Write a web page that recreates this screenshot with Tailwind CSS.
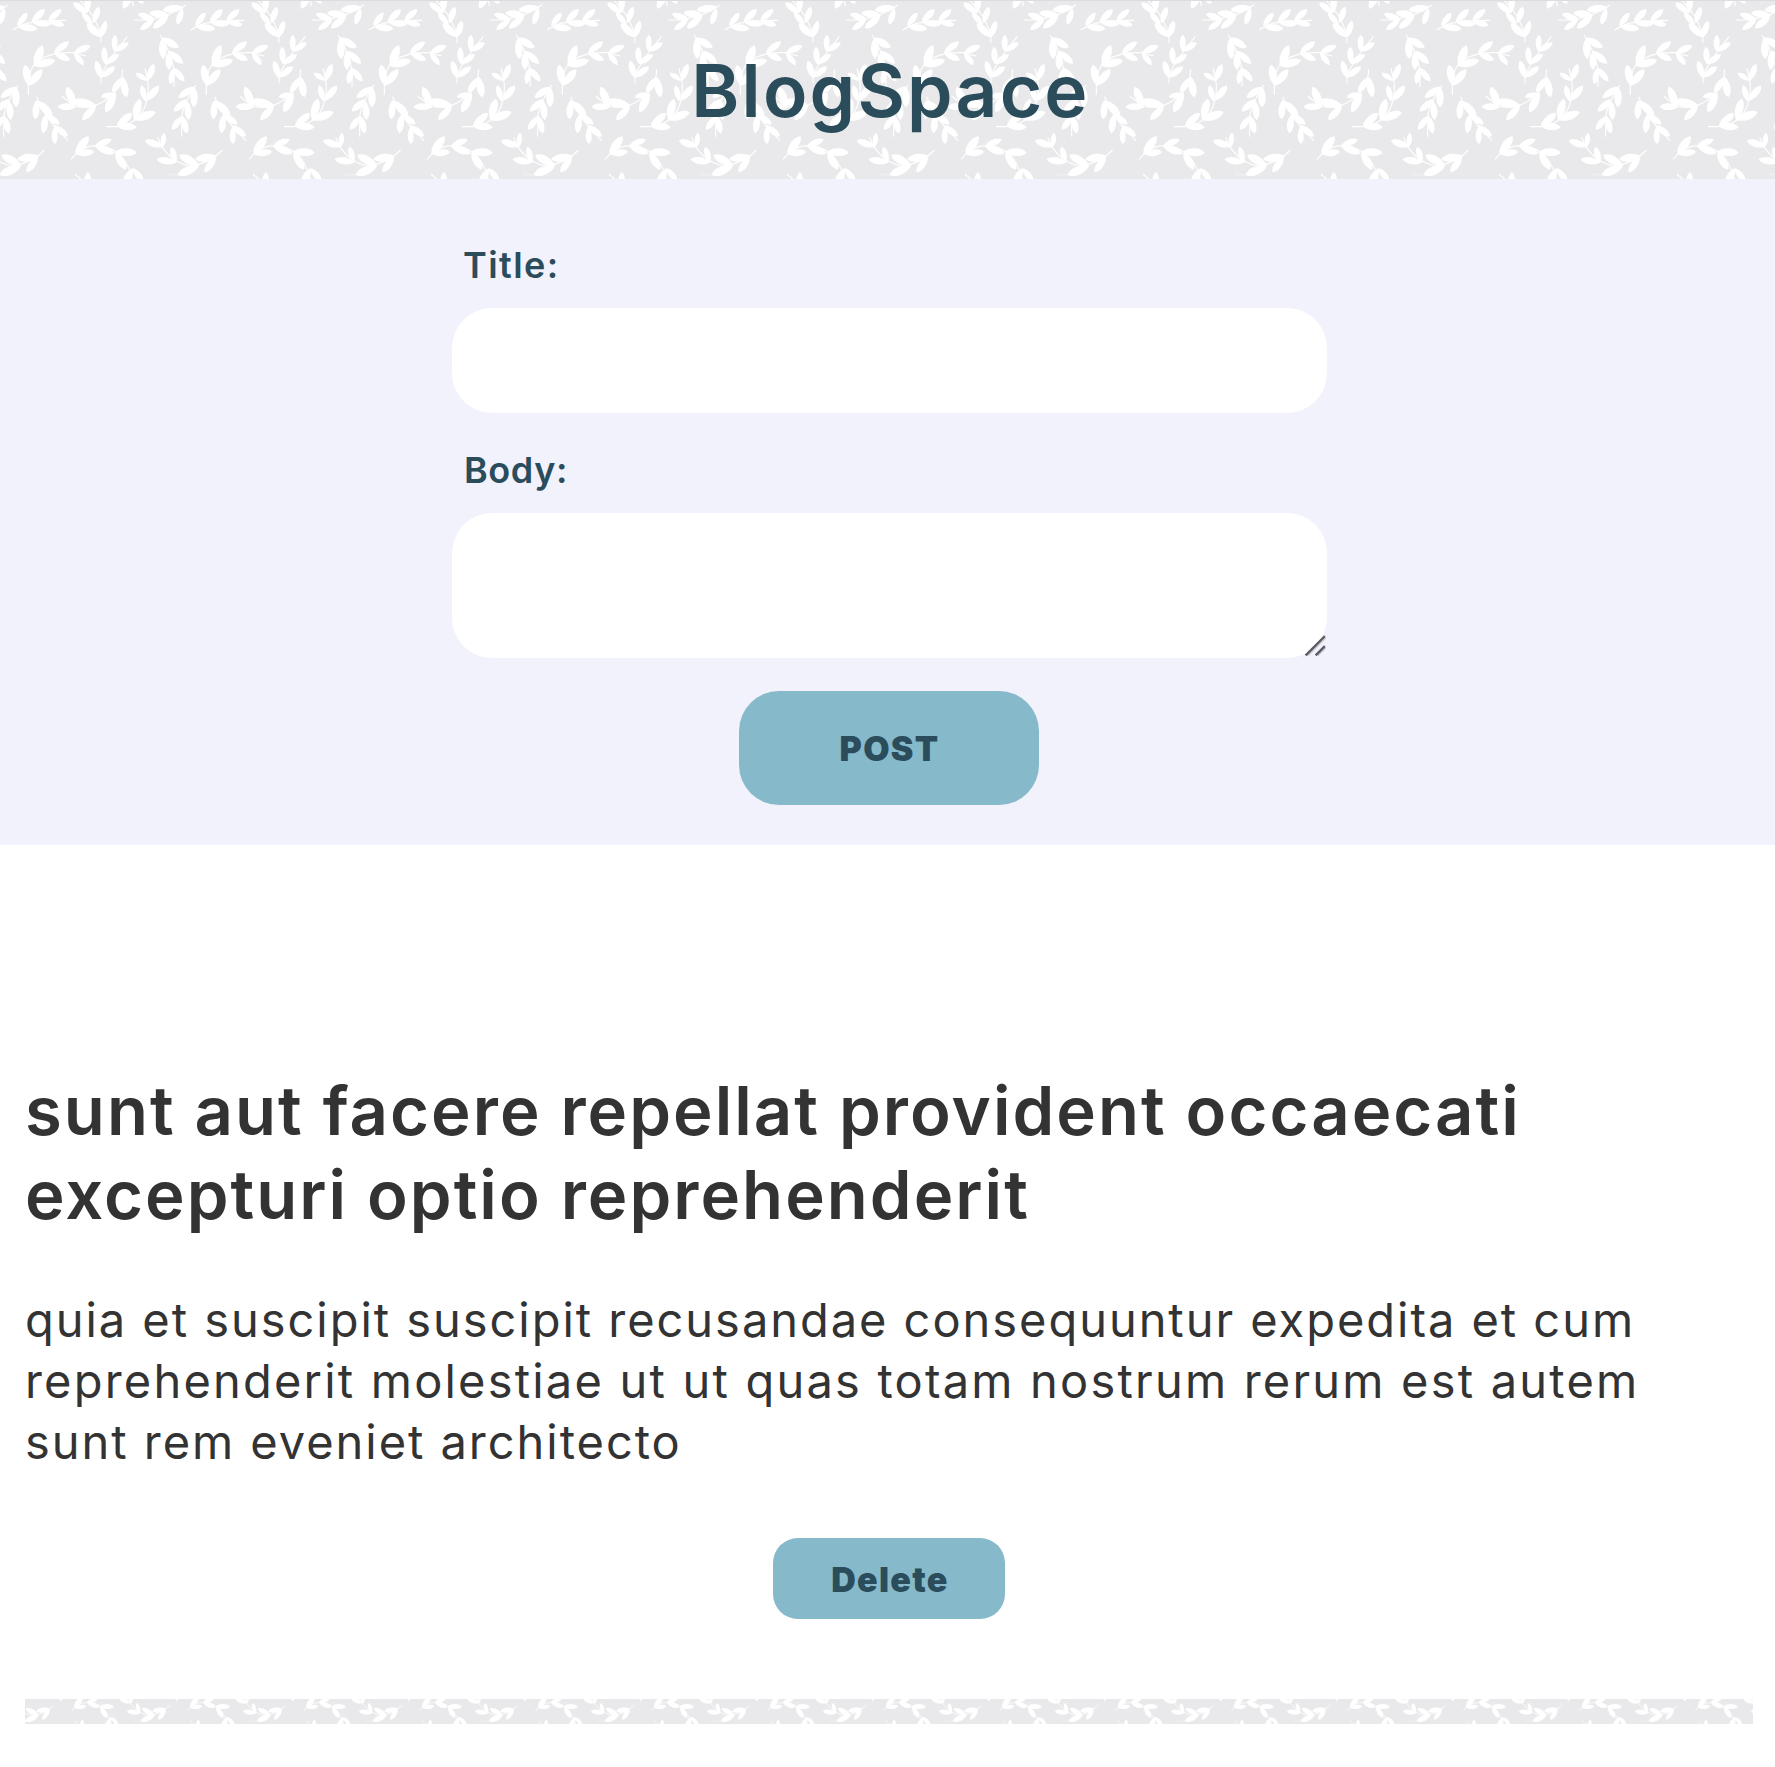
<!DOCTYPE html>
<html lang="en">
<head>
<meta charset="utf-8">
<title>BlogSpace</title>
<script src="https://cdn.jsdelivr.net/npm/@tailwindcss/browser@4"></script>
</head>
<body class="bg-white font-['Inter',sans-serif] text-[#333333]">
<header class="relative h-[179px] border-t border-[#dcdcde] bg-[#e9e9eb]">
  <svg class="absolute inset-0 h-full w-full" aria-hidden="true">
    <defs>
      <pattern id="leaves" width="534" height="534" patternUnits="userSpaceOnUse" patternTransform="scale(.33333)"></pattern>
      <pattern id="leaves-small" href="#leaves" patternTransform="translate(0 -91) scale(.2172)"></pattern>
    </defs>
    <rect width="100%" height="100%" fill="url(#leaves)"/>
  </svg>
  <h1 class="relative flex justify-center pt-[45px] pl-[6px] text-[73px] leading-[90px] font-semibold tracking-[2.2px] text-[#2a4c5b]">BlogSpace</h1>
</header>
<main>
  <form class="flex h-[666px] flex-col items-center bg-[#f2f2fc] pt-[64px] pl-[4px] text-[#2a4c5b]">
    <div class="w-[875px]">
      <label for="title" class="block h-[65px] pl-[11px] text-[36px] leading-[44px] font-semibold tracking-[1.4px]">Title:</label>
      <input id="title" class="block h-[105px] w-full rounded-[40px] bg-white px-8 outline-none">
      <label for="body" class="mt-[35px] block h-[65px] pl-[12px] text-[36px] leading-[44px] font-semibold tracking-[0.6px]">Body:</label>
      <div class="relative">
        <textarea id="body" class="block h-[145px] w-full resize-none rounded-[40px] bg-white px-8 py-6 outline-none"></textarea>
        <svg class="pointer-events-none absolute right-0 bottom-px h-6 w-6" viewBox="0 0 24 24" fill="none" aria-hidden="true">
          <path d="M5 22.5L22.5 5M15 22.5L22.5 15" stroke="#c8c8cc" stroke-width="1.5"/>
          <path d="M3.5 21.5L21 4M13.500 21.500L21 14" stroke="#5a5a60" stroke-width="2.4" stroke-linecap="square"/>
        </svg>
      </div>
    </div>
    <button type="button" class="mt-[33px] mr-[2px] h-[114px] w-[300px] rounded-[40px] bg-[#86bacb] pl-[2px] text-[34px] font-black tracking-[1.3px]">POST</button>
  </form>
  <article class="px-[25px] pt-[224px]">
    <h2 class="text-[67px] leading-[84px] font-semibold tracking-[2.03px] whitespace-nowrap">sunt aut facere repellat provident occaecati<br>excepturi optio reprehenderit</h2>
    <p class="mt-[52px] text-[47px] leading-[61px] font-normal tracking-[1.96px] whitespace-nowrap">quia et suscipit suscipit recusandae consequuntur expedita et cum<br><span class="tracking-[2.2px]">reprehenderit molestiae ut ut quas totam nostrum rerum est autem</span><br>sunt rem eveniet architecto</p>
    <div class="mt-[66px] flex justify-center pl-[3px]"><button type="button" class="h-[81px] w-[232px] rounded-[25px] bg-[#86bacb] pt-[2px] pl-[2px] text-[34px] font-black tracking-[1.3px] text-[#2a4c5b]">Delete</button></div>
  </article>
  <div class="mx-[25px] mt-[80px] h-[25px] w-[1728px] bg-[#e9e9eb]"><svg class="h-full w-full" aria-hidden="true"><rect width="100%" height="100%" fill="url(#leaves-small)"/></svg></div>
</main>
<script>
// Sprig stems, and leaves as [base x, base y, tip x, tip y], on a 534-unit repeating tile.
const stems = [
  'M38 90Q60 75 80 70Q120 62 198 61','M303 128L302 105Q290 60 265 30Q250 10 225-12','M303 250V225Q320 190 350 150L382 110',
  'M85 285V250Q88 205 110 185Q150 155 220 158L258 168','M402 60H440Q510 50 557 15','M480 105Q515 160 522 210V260',
  'M588 255Q550 310 545 350V410','M110 290Q125 330 160 375L204 422','M185 288L222 318Q290 335 345 275Q368 245 368 208',
  'M318 380H350Q410 375 435 320Q450 280 443 240L435 205','M213 478L235 455Q280 420 350 455Q390 490 400 552',
  'M473 412L485 440Q520 490 570 498Q630 490 668 450'];
const leaves = [
  [52,78,82,38],[55,80,112,86],[95,67,134,28],[98,68,154,72],[145,62,184,28],[145,62,194,76],
  [303,112,260,70],[303,112,318,62],[278,74,246,38],[280,70,297,20],[262,40,220,8],[262,38,264,-18],
  [303,234,288,182],[303,232,345,200],[315,192,312,140],[315,192,357,163],[343,154,345,104],[343,154,386,128],
  [87,257,75,194],[87,257,127,208],[103,200,128,136],[103,198,165,181],[162,158,207,125],[162,158,210,181],[222,158,271,137],[222,158,251,195],
  [550,22,488,30],[548,25,532,74],[508,46,448,38],[505,48,459,85],[465,60,414,41],[462,60,421,89],
  [485,113,536,143],[487,113,490,177],[507,153,549,191],[507,153,507,210],[520,203,553,244],[520,203,511,252],
  [582,260,536,293],[582,260,582,322],[563,298,521,334],[562,303,566,360],[548,348,516,389],[548,348,561,400],
  [110,300,106,358],[112,302,157,348],[137,343,130,400],[135,343,179,373],[163,382,165,432],[160,376,204,409],
  [226,320,200,260],[230,320,173,320],[290,318,217,302],[288,318,247,360],[347,282,302,290],[347,278,317,337],[368,232,337,277],[368,230,379,292],
  [350,380,396,339],[350,378,410,382],[403,360,420,296],[403,360,467,336],[437,304,424,256],[440,302,477,257],[443,242,407,219],[443,242,462,192],
  [226,462,266,409],[228,462,282,455],[285,438,335,418],[285,438,344,460],[345,455,410,458],[346,456,378,509],[398,505,370,560],[398,505,430,545],
  [490,440,435,422],[488,442,492,398],[530,487,470,478],[528,488,514,440],[597,497,538,465],[597,498,533,525],[650,468,586,478],[648,470,614,517]];
const leaf = ([x, y, u, v]) => {
  const dx = u - x, dy = v - y, w = .24, p = (a, b) => (x + dx*a - dy*b).toFixed(1) + ' ' + (y + dy*a + dx*b).toFixed(1);
  return `M${p(0,0)}C${p(.3,w)} ${p(.8,w)} ${p(1,0)}C${p(.8,-w)} ${p(.3,-w)} ${p(0,0)}Z`;
};
const sprigs = `<path d="${stems.join('')}" fill="none" stroke="#fff" stroke-width="3.5"/><path d="${leaves.map(leaf).join('')}" fill="#fff"/><path d="M500 525l6-5 3 7 6-6 5 6 5-5 5 5 6-6 4 5 5-4 15 2" fill="none" stroke="#fff" stroke-opacity=".6" stroke-width="2"/>`;
document.getElementById('leaves').innerHTML = [-534,0].flatMap(x => [-537,-3,531].map(y => `<g transform="translate(${x} ${y})">${sprigs}</g>`)).join('');
</script>
</body>
</html>
